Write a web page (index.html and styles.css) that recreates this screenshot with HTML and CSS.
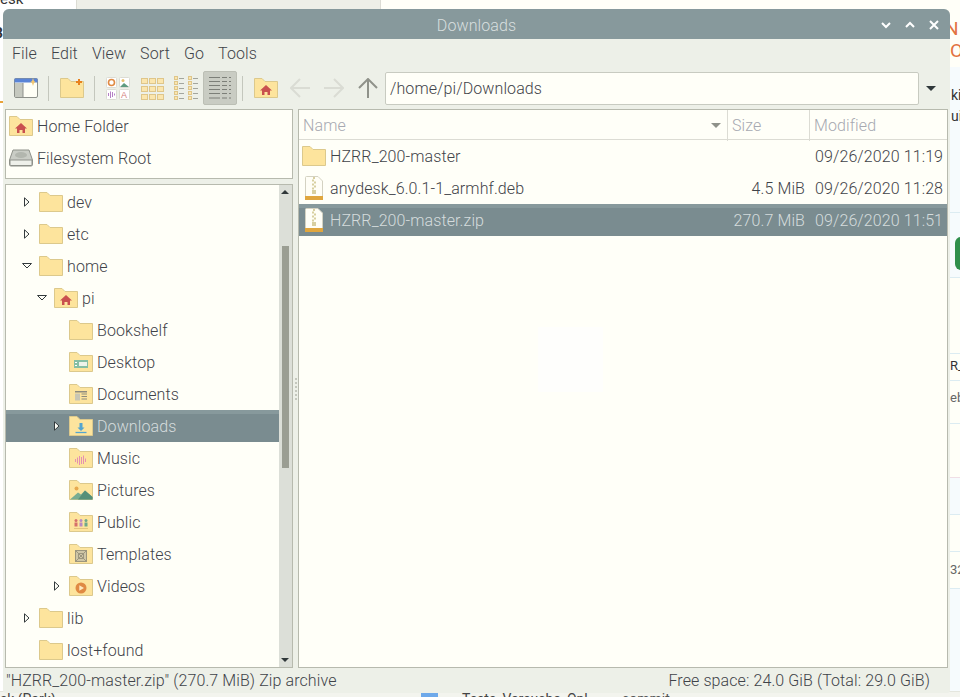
FILE: index.html
```html
<!DOCTYPE html>
<html lang="en">
<head>
    <meta charset="UTF-8" />
    <title>Downloads</title>
    <link rel="stylesheet" href="styles.css">
</head>
<body>
    <svg class="sprite" xmlns="http://www.w3.org/2000/svg">
        <symbol id="folder" viewBox="0 0 24 20">
            <path d="M.5.5H8L11 3.5H23.5V19.5H.5Z" fill="#fde49d" stroke="#dcc98c"/>
        </symbol>
        <symbol id="home" viewBox="0 0 24 20">
            <use href="#folder" width="24" height="20"/>
            <path d="M6 12.5L12 7L18 12.5H16V17H13.5V14H10.5V17H8V12.5Z" fill="#c9504f"/>
        </symbol>
        <symbol id="desktop" viewBox="0 0 24 20">
            <use href="#folder" width="24" height="20"/>
            <rect x="5" y="8" width="14" height="8" fill="#86bfa4"/>
            <rect x="10" y="10" width="8" height="4" fill="#eef3ea"/>
            <rect x="6" y="10" width="2" height="1" fill="#fff"/>
            <rect x="6" y="13" width="2" height="1" fill="#fff"/>
        </symbol>
        <symbol id="documents" viewBox="0 0 24 20">
            <use href="#folder" width="24" height="20"/>
            <path d="M6 7H18V8.5H6Z" fill="#8d8b7e"/>
            <rect x="6" y="9.5" width="5" height="7" fill="#c9c6b4"/>
            <path d="M12.5 10H18M12.5 12.5H18M12.5 15H18" stroke="#8d8b7e" stroke-width="1.2"/>
        </symbol>
        <symbol id="downloads" viewBox="0 0 24 20">
            <use href="#folder" width="24" height="20"/>
            <path d="M10.5 7H13.5V11.5H15.5L12 15L8.5 11.5H10.5Z" fill="#54a5d0"/>
            <path d="M6.5 16.5H17.5" stroke="#54a5d0" stroke-width="1.3"/>
        </symbol>
        <symbol id="music" viewBox="0 0 24 20">
            <use href="#folder" width="24" height="20"/>
            <path d="M6.5 11V14M8.5 9.5V15.5M10.5 8V17M12.5 9V16M14.5 7.5V16M16.5 10.5V14" stroke="#e58fb2" stroke-width="1"/>
        </symbol>
        <symbol id="pictures" viewBox="0 0 24 20">
            <use href="#folder" width="24" height="20"/>
            <circle cx="7.5" cy="8.5" r="2" fill="#e7a94f"/>
            <path d="M1 19.5L9 12.5L12 14.5L16 10.5L23.5 17V19.5Z" fill="#79ad92"/>
            <path d="M9 19.5L16 10.5L23.5 17V19.5Z" fill="#559079"/>
        </symbol>
        <symbol id="public" viewBox="0 0 24 20">
            <use href="#folder" width="24" height="20"/>
            <circle cx="7" cy="8.5" r="1.5" fill="#d6706a"/>
            <rect x="5.5" y="10.5" width="3" height="4" fill="#d6706a"/>
            <circle cx="12" cy="8.5" r="1.5" fill="#b98ac2"/>
            <rect x="10.5" y="10.5" width="3" height="4" fill="#b98ac2"/>
            <circle cx="17" cy="8.5" r="1.5" fill="#6fa88a"/>
            <rect x="15.5" y="10.5" width="3" height="4" fill="#6fa88a"/>
            <path d="M5 16.5H19" stroke="#e3c27e"/>
        </symbol>
        <symbol id="templates" viewBox="0 0 24 20">
            <use href="#folder" width="24" height="20"/>
            <rect x="6.5" y="6.5" width="11" height="11" fill="#cfc6a6" stroke="#9c967e"/>
            <path d="M6.5 6.5L17.5 17.5M17.5 6.5L6.5 17.5M9.5 9.5H14.5V14.5H9.5Z" fill="none" stroke="#9c967e"/>
        </symbol>
        <symbol id="videos" viewBox="0 0 24 20">
            <use href="#folder" width="24" height="20"/>
            <circle cx="12" cy="12" r="5.5" fill="#e08a43"/>
            <path d="M10.3 9.3L15 12L10.3 14.7Z" fill="#fde9c0"/>
        </symbol>
        <symbol id="zip" viewBox="0 0 18 24">
            <path d="M.5 1.5Q.5.5 1.5.5H13L17.5 5V22.5Q17.5 23.5 16.5 23.5H1.5Q.5 23.5.5 22.5Z" fill="#fffef6" stroke="#d4d2c2"/>
            <rect x="0" y="20" width="18" height="4" fill="#e0a63e"/>
            <path d="M8 1H10V3H8ZM7 3.5H9V5.5H7ZM9 5.5H11V7.5H9ZM7 7.5H9V9.5H7ZM9 9.5H11V11.5H9ZM7 11.5H9V13.5H7ZM7 14H11V18H7Z" fill="#d8cf9f"/>
        </symbol>
        <symbol id="drive" viewBox="0 0 24 18">
            <path d="M4 1H20L23.5 11V15.5Q23.5 17 22 17H2Q.5 17 .5 15.5V11Z" fill="#c9ccc5" stroke="#8e918a"/>
            <path d="M1 11H23V15.5Q23 16.5 22 16.5H2Q1 16.5 1 15.5Z" fill="#eef0ea" stroke="#8e918a"/>
            <ellipse cx="12" cy="6" rx="6" ry="3" fill="#b2b6ae"/>
        </symbol>
        <symbol id="closed" viewBox="0 0 13 10">
            <path d="M4.5 .8V9.2L9 5Z" fill="#fffff8" stroke="#333a3c"/>
        </symbol>
        <symbol id="open" viewBox="0 0 13 10">
            <path d="M2.5 2.5H11.5L7 7Z" fill="#fffff8" stroke="#333a3c"/>
        </symbol>
    </svg>

    <!-- the web page behind the window -->
    <div class="backdrop">
        <div class="back-top">
            <div class="back-left">
                <div class="back-esk">esk</div>
                <div class="back-b">B</div>
                <div class="back-orange"></div>
            </div>
            <div class="back-mid"></div>
            <div class="back-main">
                <div class="strip">
                    <div class="strip-head">N<br>O</div>
                    <div class="strip-a">ki<br>ui</div>
                    <div class="strip-b"><span class="green-btn"></span></div>
                    <div class="strip-c"></div>
                    <div class="strip-d">R_</div>
                    <div class="strip-e">eb</div>
                    <div class="strip-f"></div>
                    <div class="strip-g"></div>
                    <div class="strip-h"></div>
                    <div class="strip-i">32</div>
                </div>
            </div>
        </div>
        <div class="back-bottom">
            <span class="back-park">sk (Park)</span>
            <span class="back-square"></span>
            <span class="back-tests">Tests_Versuche_Onl...</span>
            <span class="back-commit">commit</span>
        </div>
    </div>

    <div class="window">
        <div class="titlebar">
            <span class="title">Downloads</span>
            <div class="winbtns">
                <svg width="12" height="12" viewBox="0 0 12 12"><path d="M2 4L6 8L10 4" fill="none" stroke="#fff" stroke-width="2"/></svg>
                <svg width="12" height="12" viewBox="0 0 12 12"><path d="M2 8L6 4L10 8" fill="none" stroke="#fff" stroke-width="2"/></svg>
                <svg width="12" height="12" viewBox="0 0 12 12"><path d="M2 2L10 10M10 2L2 10" fill="none" stroke="#fff" stroke-width="2"/></svg>
            </div>
        </div>

        <div class="menubar">
            <span>File</span>
            <span>Edit</span>
            <span>View</span>
            <span>Sort</span>
            <span>Go</span>
            <span>Tools</span>
        </div>

        <div class="toolbar">
            <svg class="tb-window" width="24" height="20" viewBox="0 0 24 20">
                <rect x=".5" y=".5" width="23" height="19" rx="1.5" fill="#fffff6" stroke="#8d908a"/>
                <rect x="1" y="5" width="8" height="14" fill="#c5c8bf"/>
                <path d="M9 5V19" stroke="#8d908a"/>
                <rect x=".5" y=".5" width="23" height="4" fill="#5a84d6"/>
                <path d="M19 0L20 3L21.5 4L20 5L19 8L18 5L16.5 4L18 3Z" fill="#f3c66f"/>
            </svg>
            <span class="tb-sep"></span>
            <svg class="tb-newfolder" width="24" height="20" viewBox="0 0 24 20">
                <use href="#folder" width="24" height="20"/>
                <path d="M19 1V7M16 4H22" stroke="#e8821e" stroke-width="2"/>
            </svg>
            <span class="tb-sep"></span>
            <svg class="tb-icons" width="24" height="23" viewBox="0 0 24 23">
                <rect x=".5" y=".5" width="10" height="10" rx="1" fill="#fff" stroke="#dcdcd4"/>
                <circle cx="5.5" cy="5.5" r="3" fill="none" stroke="#e08a43" stroke-width="1.6"/>
                <rect x="13.5" y=".5" width="10" height="10" rx="1" fill="#fff" stroke="#dcdcd4"/>
                <circle cx="17" cy="3.5" r="1.5" fill="#e7c06f"/>
                <path d="M14 10L18 6L23 10Z" fill="#5f9b80"/>
                <rect x=".5" y="12.5" width="10" height="10" rx="1" fill="#fff" stroke="#dcdcd4"/>
                <path d="M2.5 16V19M4.5 14.5V21M6.5 15V20M8.5 16.5V18.5" stroke="#b57fc6"/>
                <rect x="13.5" y="12.5" width="10" height="10" rx="1" fill="#fff" stroke="#dcdcd4"/>
                <text x="15" y="21" class="tb-letter">A</text>
            </svg>
            <svg class="tb-thumbs" width="23" height="23" viewBox="0 0 23 23">
                <g fill="#fbe6ae" stroke="#dfc68a">
                    <rect x=".5" y="1.5" width="6" height="5"/><rect x="8.5" y="1.5" width="6" height="5"/><rect x="16.5" y="1.5" width="6" height="5"/>
                    <rect x=".5" y="9.5" width="6" height="5"/><rect x="8.5" y="9.5" width="6" height="5"/><rect x="16.5" y="9.5" width="6" height="5"/>
                    <rect x=".5" y="17.5" width="6" height="5"/><rect x="8.5" y="17.5" width="6" height="5"/><rect x="16.5" y="17.5" width="6" height="5"/>
                </g>
            </svg>
            <svg class="tb-compact" width="25" height="24" viewBox="0 0 25 24">
                <g fill="#fbe6ae" stroke="#dfc68a">
                    <rect x=".5" y=".5" width="3" height="3"/><rect x=".5" y="5.5" width="3" height="3"/><rect x=".5" y="10.5" width="3" height="3"/><rect x=".5" y="15.5" width="3" height="3"/><rect x=".5" y="20.5" width="3" height="3"/>
                    <rect x="14.5" y=".5" width="3" height="3"/><rect x="14.5" y="5.5" width="3" height="3"/><rect x="14.5" y="10.5" width="3" height="3"/><rect x="14.5" y="15.5" width="3" height="3"/><rect x="14.5" y="20.5" width="3" height="3"/>
                </g>
                <path d="M5 2.5H10M5 7.5H10M5 12.5H10M5 17.5H10M5 22.5H10M19 2.5H24M19 7.5H24M19 12.5H24M19 17.5H24M19 22.5H24" stroke="#a3a69e"/>
            </svg>
            <div class="tb-detailed">
                <svg width="22" height="22" viewBox="0 0 22 22">
                    <path d="M0 .5H11M13 .5H18M20 .5H22M0 4.5H11M13 4.5H18M20 4.5H22M0 8.5H11M13 8.5H18M20 8.5H22M0 12.5H11M13 12.5H18M20 12.5H22M0 16.5H11M13 16.5H18M20 16.5H22M0 21H11M13 21H18M20 21H22" stroke="#7c7f78"/>
                </svg>
            </div>
            <span class="tb-sep tb-sep-last"></span>
            <svg class="tb-home" width="24" height="20" viewBox="0 0 24 20"><use href="#home" width="24" height="20"/></svg>
            <svg class="tb-back" width="20" height="20" viewBox="0 0 20 20"><path d="M10 1L1 10L10 19M1 10H20" fill="none" stroke="#dadcd4" stroke-width="2"/></svg>
            <svg class="tb-forward" width="20" height="20" viewBox="0 0 20 20"><path d="M10 1L19 10L10 19M19 10H0" fill="none" stroke="#dadcd4" stroke-width="2"/></svg>
            <svg class="tb-up" width="20" height="20" viewBox="0 0 20 20"><path d="M1 10L10 1L19 10M10 1V20" fill="none" stroke="#8f928a" stroke-width="2"/></svg>
            <div class="address">/home/pi/Downloads</div>
            <span class="address-arrow"></span>
        </div>

        <div class="panes">
            <div class="left-pane">
                <div class="places">
                    <div class="place"><svg class="ico"><use href="#home"/></svg>Home Folder</div>
                    <div class="place"><svg class="ico"><use href="#drive"/></svg>Filesystem Root</div>
                </div>
                <div class="tree">
                    <div class="tree-rows">
                        <div class="node"><svg class="exp"><use href="#closed"/></svg><svg class="ico"><use href="#folder"/></svg>dev</div>
                        <div class="node"><svg class="exp"><use href="#closed"/></svg><svg class="ico"><use href="#folder"/></svg>etc</div>
                        <div class="node"><svg class="exp"><use href="#open"/></svg><svg class="ico"><use href="#folder"/></svg>home</div>
                        <div class="node lvl1"><svg class="exp"><use href="#open"/></svg><svg class="ico"><use href="#home"/></svg>pi</div>
                        <div class="node lvl2"><span class="exp"></span><svg class="ico"><use href="#folder"/></svg>Bookshelf</div>
                        <div class="node lvl2"><span class="exp"></span><svg class="ico"><use href="#desktop"/></svg>Desktop</div>
                        <div class="node lvl2"><span class="exp"></span><svg class="ico"><use href="#documents"/></svg>Documents</div>
                        <div class="node lvl2 selected"><svg class="exp"><use href="#closed"/></svg><svg class="ico"><use href="#downloads"/></svg>Downloads</div>
                        <div class="node lvl2"><span class="exp"></span><svg class="ico"><use href="#music"/></svg>Music</div>
                        <div class="node lvl2"><span class="exp"></span><svg class="ico"><use href="#pictures"/></svg>Pictures</div>
                        <div class="node lvl2"><span class="exp"></span><svg class="ico"><use href="#public"/></svg>Public</div>
                        <div class="node lvl2"><span class="exp"></span><svg class="ico"><use href="#templates"/></svg>Templates</div>
                        <div class="node lvl2"><svg class="exp"><use href="#closed"/></svg><svg class="ico"><use href="#videos"/></svg>Videos</div>
                        <div class="node"><svg class="exp"><use href="#closed"/></svg><svg class="ico"><use href="#folder"/></svg>lib</div>
                        <div class="node"><span class="exp"></span><svg class="ico"><use href="#folder"/></svg>lost+found</div>
                    </div>
                    <div class="scrollbar">
                        <span class="sb-up"></span>
                        <span class="sb-thumb"></span>
                        <span class="sb-down"></span>
                    </div>
                </div>
            </div>

            <div class="splitter"><i></i><i></i><i></i><i></i><i></i><i></i></div>

            <div class="files">
                <div class="file-head">
                    <div class="col-name">Name<span class="sort-arrow"></span></div>
                    <div class="col-size">Size</div>
                    <div class="col-mod">Modified</div>
                </div>
                <div class="file-row">
                    <div class="col-name"><svg class="ico"><use href="#folder"/></svg>HZRR_200-master</div>
                    <div class="col-size"></div>
                    <div class="col-mod">09/26/2020 11:19</div>
                </div>
                <div class="file-row">
                    <div class="col-name"><svg class="ico-zip"><use href="#zip"/></svg>anydesk_6.0.1-1_armhf.deb</div>
                    <div class="col-size">4.5 MiB</div>
                    <div class="col-mod">09/26/2020 11:28</div>
                </div>
                <div class="file-row selected">
                    <div class="col-name"><svg class="ico-zip"><use href="#zip"/></svg>HZRR_200-master.zip</div>
                    <div class="col-size">270.7 MiB</div>
                    <div class="col-mod">09/26/2020 11:51</div>
                </div>
                <div class="ghost"></div>
            </div>
        </div>

        <div class="statusbar">
            <span>"HZRR_200-master.zip" (270.7 MiB) Zip archive</span>
            <span>Free space: 24.0 GiB (Total: 29.0 GiB)</span>
        </div>
    </div>
</body>
</html>
```

FILE: styles.css
```css
html, body {
    margin: 0;
    padding: 0;
    height: 697px;
    overflow: hidden;
}
body {
    position: relative;
    background-color: #fffff8;
    font-family: Roboto, "Liberation Sans", sans-serif;
    font-size: 16px;
    font-weight: 300;
    letter-spacing: 0.1px;
    color: #3f4349;
}
.sprite {
    display: none;
}

/* page behind the window */
.backdrop {
    display: grid;
    grid-template-rows: 692px 5px;
    height: 697px;
    overflow: hidden;
    font-size: 14px;
    font-weight: 400;
    letter-spacing: 0;
}
.back-top {
    display: flex;
    border-bottom: 1px solid #e4e6de;
}
.back-left {
    width: 76px;
    background-color: #ffffff;
    border-right: 1px solid #dcdcd4;
    color: #333;
    overflow: hidden;
}
.back-esk {
    margin: -9px 0 0 -2px;
    height: 16px;
    text-align: left;
    padding-left: 2px;
    line-height: 16px;
    font-size: 15px;
}
.back-b {
    margin-top: 18px;
    margin-left: -6px;
    font-weight: bold;
}
.back-orange {
    margin-top: 60px;
    width: 4px;
    height: 2px;
    background-color: #e8a33a;
}
.back-mid {
    width: 303px;
    background-color: #eeefe8;
    border-right: 1px solid #dcdcd4;
}
.back-main {
    flex: 1;
    display: flex;
    justify-content: flex-end;
}
.strip {
    width: 10px;
    background-color: #f6fbfd;
    overflow: hidden;
    white-space: nowrap;
    color: #333;
}
.strip-head {
    height: 67px;
    box-sizing: border-box;
    padding-top: 18px;
    background-color: #fffff8;
    color: #e2733f;
    font-size: 19px;
    line-height: 22px;
    text-indent: -5px;
}
.strip-a {
    height: 146px;
    box-sizing: border-box;
    padding-top: 18px;
    line-height: 21px;
    padding-left: 1px;
    border-bottom: 1px solid #dcecf2;
}
.strip-b {
    height: 65px;
    box-sizing: border-box;
    padding: 24px 0 0 5px;
    border-bottom: 1px solid #dcecf2;
}
.green-btn {
    display: block;
    width: 20px;
    height: 33px;
    border-radius: 6px;
    background-color: #2f8f4b;
}
.strip-c {
    height: 76px;
    box-sizing: border-box;
    background-color: #fffff8;
    border-bottom: 1px solid #dcecf2;
}
.strip-d {
    height: 27px;
    box-sizing: border-box;
    background-color: #fffff8;
    line-height: 23px;
    font-size: 13px;
    border-bottom: 1px solid #dcecf2;
}
.strip-e {
    height: 43px;
    box-sizing: border-box;
    background-color: #fffff8;
    line-height: 34px;
    font-size: 13px;
    color: #666;
    border-bottom: 1px solid #dcecf2;
}
.strip-f {
    height: 54px;
    box-sizing: border-box;
    background-color: #fffff8;
    border-bottom: 1px solid #f0dfe6;
}
.strip-g {
    height: 37px;
    box-sizing: border-box;
    border-bottom: 1px solid #dcecf2;
}
.strip-h {
    height: 37px;
    box-sizing: border-box;
    background-color: #fffff8;
    border-bottom: 1px solid #dcecf2;
}
.strip-i {
    height: 37px;
    box-sizing: border-box;
    background-color: #fffff8;
    line-height: 36px;
    font-size: 13px;
    color: #666;
    border-bottom: 1px solid #dcecf2;
}
.back-bottom {
    display: flex;
    align-items: flex-start;
    background-color: #f3f4ee;
    line-height: 14px;
    color: #444;
    white-space: nowrap;
}
.back-park {
    width: 421px;
}
.back-square {
    width: 17px;
    height: 8px;
    background-color: #6ea9ea;
}
.back-tests {
    margin-left: 24px;
    width: 160px;
}
.back-commit {
    color: #555;
}

/* file manager window */
.window {
    position: absolute;
    left: 3px;
    top: 9px;
    width: 947px;
    height: 684px;
    display: flex;
    flex-direction: column;
    background-color: #edf0e8;
    border-radius: 6px 6px 3px 3px;
    overflow: hidden;
}
.titlebar {
    flex: 0 0 30px;
    display: flex;
    align-items: center;
    justify-content: center;
    position: relative;
    background-color: #87999c;
}
.title {
    color: #d8dfdf;
    padding-top: 2px;
}
.winbtns {
    position: absolute;
    right: 10px;
    top: 10px;
    display: flex;
    gap: 12px;
}
.menubar {
    flex: 0 0 28px;
    display: flex;
    align-items: center;
    gap: 14px;
    padding: 1px 0 0 9px;
    box-sizing: border-box;
}
.toolbar {
    flex: 0 0 42px;
    display: flex;
    align-items: center;
    padding-left: 11px;
    box-sizing: border-box;
}
.toolbar svg {
    flex: none;
}
.tb-sep {
    flex: none;
    width: 1px;
    height: 25px;
    background-color: #c4c7bd;
    margin: 0 11px 0 10px;
}
.tb-icons {
    margin-right: 11px;
}
.tb-thumbs {
    margin-right: 10px;
}
.tb-letter {
    font-family: "Liberation Sans", sans-serif;
    font-size: 9px;
    fill: #d3807f;
}
.tb-detailed {
    flex: none;
    width: 34px;
    height: 34px;
    box-sizing: border-box;
    margin-left: 4px;
    display: flex;
    align-items: center;
    justify-content: center;
    background-color: #c9ccc3;
    border: 1px solid #bcbfb5;
    border-radius: 2px;
}
.tb-sep-last {
    margin-left: 5px;
}
.tb-back {
    margin-left: 12px;
}
.tb-forward {
    margin-left: 14px;
}
.tb-up {
    margin-left: 14px;
}
.address {
    flex: none;
    width: 534px;
    height: 33px;
    box-sizing: border-box;
    margin-left: 7px;
    padding-left: 4px;
    line-height: 31px;
    background-color: #fffff8;
    border: 1px solid #c8cbc1;
    border-radius: 2px;
}
.address-arrow {
    flex: none;
    margin-left: 7px;
    border-top: 5px solid #30383a;
    border-left: 5px solid transparent;
    border-right: 5px solid transparent;
}

.panes {
    flex: 1;
    min-height: 0;
    display: flex;
    padding: 0 2px;
}
.left-pane {
    flex: 0 0 288px;
    display: flex;
    flex-direction: column;
    gap: 5px;
}
.places {
    flex: 0 0 70px;
    box-sizing: border-box;
    background-color: #fffff8;
    border: 1px solid #b7baae;
}
.place {
    height: 32px;
    display: flex;
    align-items: center;
    gap: 4px;
    padding-left: 3px;
}
.ico {
    flex: none;
    width: 24px;
    height: 20px;
}
.ico-zip {
    flex: none;
    width: 18px;
    height: 24px;
    margin: 0 3px;
}
.tree {
    flex: 1;
    min-height: 0;
    display: flex;
    background-color: #fffff8;
    border: 1px solid #b7baae;
}
.tree-rows {
    flex: 1;
    padding-top: 1px;
    overflow: hidden;
}
.node {
    height: 32px;
    display: flex;
    align-items: center;
    padding-left: 14px;
}
.node .ico {
    margin-right: 4px;
}
.lvl1 {
    padding-left: 29px;
}
.lvl2 {
    padding-left: 44px;
}
.selected {
    background: linear-gradient(#87999c 4px, #7a8c90 4px);
    color: #d5dcdd;
}
.exp {
    flex: none;
    width: 13px;
    height: 10px;
    margin-right: 6px;
}
.scrollbar {
    flex: 0 0 13px;
    position: relative;
    background-color: #dcdfd8;
}
.sb-up,
.sb-down {
    position: absolute;
    left: 2px;
    border-left: 4px solid transparent;
    border-right: 4px solid transparent;
}
.sb-up {
    top: 5px;
    border-bottom: 4px solid #30383a;
}
.sb-down {
    bottom: 5px;
    border-top: 4px solid #30383a;
}
.sb-thumb {
    position: absolute;
    left: 3px;
    top: 61px;
    width: 7px;
    height: 222px;
    background-color: #9b9e93;
}
.splitter {
    flex: 0 0 5px;
    display: flex;
    flex-direction: column;
    align-items: center;
    justify-content: center;
    gap: 2px;
}
.splitter i {
    width: 2px;
    height: 2px;
    background-color: #c4c7bd;
}
.files {
    flex: 1;
    position: relative;
    background-color: #fffff8;
    border: 1px solid #b7baae;
    overflow: hidden;
}
.file-head,
.file-row {
    display: grid;
    grid-template-columns: 428px 82px 1fr;
    align-items: center;
}
.file-head {
    height: 30px;
    box-sizing: border-box;
    border-bottom: 1px solid #dcdcd4;
    color: #a7a9b1;
    line-height: 31px;
}
.file-head .col-name {
    padding-left: 4px;
}
.file-head .col-size,
.file-head .col-mod {
    height: 100%;
    box-sizing: border-box;
    border-left: 1px solid #dcdcd4;
    text-align: left;
    padding: 0 0 0 4px;
}
.file-row {
    height: 32px;
}
.col-name {
    display: flex;
    align-items: center;
    gap: 4px;
    padding-left: 3px;
}
.sort-arrow {
    margin-left: auto;
    margin-right: 6px;
    border-top: 5px solid #8f928a;
    border-left: 5px solid transparent;
    border-right: 5px solid transparent;
}
.col-size {
    text-align: right;
    padding-right: 4px;
}
.col-mod {
    padding-left: 6px;
    white-space: nowrap;
}
.ghost {
    position: absolute;
    left: 239px;
    top: 217px;
    width: 65px;
    height: 65px;
    background-color: #fefefc;
}
.statusbar {
    flex: 0 0 25px;
    display: flex;
    align-items: center;
    justify-content: space-between;
    padding: 0 20px 0 3px;
    box-sizing: border-box;
}
```
